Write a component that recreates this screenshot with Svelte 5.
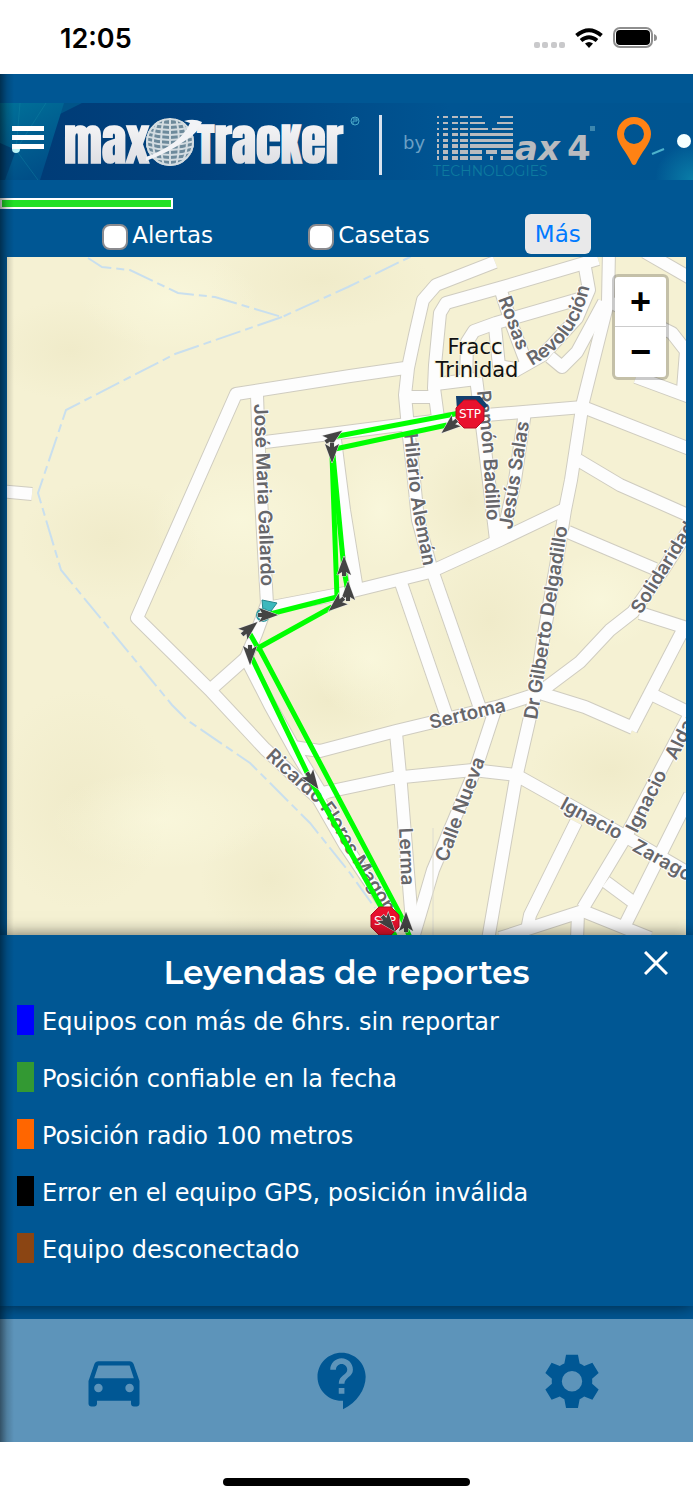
<script lang="ts">
    // State variables
    let alertas: boolean = false;
    let casetas: boolean = false;
    let showLegend: boolean = true;
    const progress: number = 25;

    const legend = [
        { color: '#0000ff', text: 'Equipos con más de 6hrs. sin reportar' },
        { color: '#339933', text: 'Posición confiable en la fecha' },
        { color: '#ff6600', text: 'Posición radio 100 metros' },
        { color: '#000000', text: 'Error en el equipo GPS, posición inválida' },
        { color: '#8b4513', text: 'Equipo desconectado' }
    ];

    // Bottom navigation, icons drawn on a 24x24 grid
    const tabs = [
        {
            label: 'Unidades',
            path: 'M18.92 6.01C18.72 5.42 18.16 5 17.5 5h-11c-.66 0-1.21.42-1.42 1.01L3 12v8c0 .55.45 1 1 1h1c.55 0 1-.45 1-1v-1h12v1c0 .55.45 1 1 1h1c.55 0 1-.45 1-1v-8l-2.08-5.99zM6.5 16c-.83 0-1.5-.67-1.5-1.5S5.67 13 6.5 13s1.5.67 1.5 1.5S7.33 16 6.5 16zm11 0c-.83 0-1.5-.67-1.5-1.5s.67-1.5 1.5-1.5 1.5.67 1.5 1.5-.67 1.5-1.5 1.5zM5 11l1.5-4.5h11L19 11H5z'
        },
        {
            label: 'Ayuda',
            path: 'M11.5 2C6.81 2 3 5.81 3 10.5S6.81 19 11.5 19h.5v3c4.86-2.34 8-7 8-11.5C20 5.81 16.19 2 11.5 2zm1 14.5h-2v-2h2v2zm0-3.5h-2c0-3.25 3-3 3-5 0-1.1-.9-2-2-2s-2 .9-2 2h-2c0-2.21 1.79-4 4-4s4 1.79 4 4c0 2.5-3 2.75-3 5z'
        },
        {
            label: 'Ajustes',
            path: 'M9.9 2.7h4.2l.6 3.1q.8.3 1.6.9l2.9-1.1 2.2 3.6-2.3 2q.1.9 0 1.8l2.3 2-2.2 3.6-2.9-1.1q-.8.6-1.6.9l-.6 3.1H9.9l-.6-3.1q-.8-.3-1.6-.9l-2.9 1.1-2.2-3.6 2.3-2q-.1-.9 0-1.8l-2.3-2 2.2-3.6 2.9 1.1q.8-.6 1.6-.9zM12 8.5a3.6 3.6 0 1 0 0 7.2 3.6 3.6 0 0 0 0-7.2z'
        }
    ];

    // Map data
    const roads: string[] = [
        'M0 491L32 494',
        'M405 368L350 376L236 394L137 618L210 690L265 749L318 798L345 845L402 930',
        'M257 395L260 480L267 604L256 634L246 658L270 705L296 752L325 800',
        'M246 658L210 690',
        'M265 442L330 434L400 425L486 415L583 407L690 449',
        'M335 440L344 510L357 590',
        'M267 608L345 593L430 572L500 540L567 508',
        'M495 262L436 285L423 300L415 335L408 368L405 395L408 428L413 470L418 520L433 575',
        'M598 259L503 287L446 303L440 313L435 365L434 388L438 418',
        'M406 397H434',
        'M586 297L496 323L474 331L467 342L466 385',
        'M436 384L476 379',
        'M500 288L512 325L526 362',
        'M495 327L499 366L520 370',
        'M584 262L589 290L577 318L543 355L513 372',
        'M550 357L562 367L577 352L604 302',
        'M609 250L608 302L583 402L571 480L565 510L557 560L543 640L535 695L516 778L488 940',
        'M645 252L690 278',
        'M610 302L672 333L686 351L683 390',
        'M636 377L690 397',
        'M476 378L482 425L490 490L496 540',
        'M525 412L515 480L503 535',
        'M578 460L620 485L690 516',
        'M568 532L655 569',
        'M690 528L663 570L633 612L610 630L580 662L540 692',
        'M640 613L690 629',
        'M684 628L631 730',
        'M540 693L585 707L633 728',
        'M653 695L690 713',
        'M401 583L446 714',
        'M433 573L480 708',
        'M293 747L320 751L396 731L500 706L537 694',
        'M322 793L393 778L473 770L516 775L623 835L690 874',
        'M396 733L401 785L411 910L413 940',
        'M495 710L476 768L433 870L413 938',
        'M576 822L530 915L527 930',
        'M500 938L583 911L650 938',
        'M578 913L577 940',
        'M583 908L625 838L690 714',
        'M690 795L660 855L625 925',
        'M606 882L633 902'
    ];

    const streams: string[] = [
        'M88 258L102 267L130 270L178 293L215 297L282 317L348 287L412 256',
        'M282 317L175 354L66 410L38 493L61 570L172 705L187 720L250 763L310 823L350 873L375 908'
    ];

    const streets = [
        { text: 'José Maria Gallardo', d: 'M254 404L262 604' },
        { text: 'Hilario Alemán', d: 'M404 434L411 500L425 576' },
        { text: 'Ramón Badillo', d: 'M477 391L483 450L488 540' },
        { text: 'Jesús Salas', d: 'M512 530L531 410' },
        { text: 'Dr Gilberto Delgadillo', d: 'M537 720L572 500' },
        { text: 'Sertoma', d: 'M431 729L520 708' },
        { text: 'Solidaridad', d: 'M641 615L716 495' },
        { text: 'Calle Nueva', d: 'M447 863L492 741' },
        { text: 'Lerma', d: 'M399 828L402 900' },
        { text: 'Ignacio', d: 'M559 808L640 852' },
        { text: 'Zaragoza', d: 'M631 850L730 905' },
        { text: 'Ignacio', d: 'M637 834L680 748' },
        { text: 'Aldama', d: 'M676 761L722 669' },
        { text: 'Rosas', d: 'M498 299L524 368' },
        { text: 'Revolución', d: 'M532 366C560 350 587 325 593 265' },
        { text: 'Ricardo Flores Magón', d: 'M265 757L303 792Q325 808 345 850L400 936' }
    ];

    const route: string[] = [
        'M460 413L333 437',
        'M447 425L335 449',
        'M332 455L337 597L270 614',
        'M333 455L344 570L348 592',
        'M332 607L258 648L250 634',
        'M258 646L401 916L411 940',
        'M251 656L313 785L380 905L397 940'
    ];

    const arrows = [
        { x: 333, y: 437, r: 55 },
        { x: 332, y: 452, r: 180 },
        { x: 450, y: 426, r: 230 },
        { x: 344, y: 567, r: 0 },
        { x: 348, y: 592, r: 0 },
        { x: 337, y: 604, r: 230 },
        { x: 267, y: 615, r: 90 },
        { x: 249, y: 629, r: 50 },
        { x: 250, y: 654, r: 180 },
        { x: 312, y: 780, r: 145 },
        { x: 388, y: 923, r: 140 },
        { x: 406, y: 923, r: 0 }
    ];

    // Striped M of the Max4 logo: y, thickness and the [from, to] pieces of each row
    const stripes = [
        { y: 13, h: 2, parts: [[470, 482], [500, 513]] },
        { y: 19, h: 2, parts: [[470, 485], [497, 513]] },
        { y: 25, h: 2, parts: [[470, 488], [492, 513]] },
        { y: 30, h: 3, parts: [[470, 513]] },
        { y: 36, h: 3, parts: [[470, 513]] },
        { y: 41, h: 4, parts: [[470, 513]] },
        { y: 47, h: 4, parts: [[470, 482], [486, 497], [501, 513]] },
        { y: 53, h: 4, parts: [[470, 482], [490, 493], [501, 513]] }
    ];
    const bars = [[437, 439], [443, 448], [452, 458], [460, 468]];

    function closeLegend() {
        showLegend = false;
    }
</script>

<div class="phone">
    <!-- System status bar -->
    <div class="status-bar">
        <span class="clock">12:05</span>
        <svg class="status-icons" viewBox="0 0 124 24" aria-hidden="true">
            <g fill="#c9c9cb">
                <rect x="1" y="16" width="6" height="6" rx="2" />
                <rect x="9" y="16" width="6" height="6" rx="2" />
                <rect x="18" y="16" width="6" height="6" rx="2" />
                <rect x="26" y="16" width="6" height="6" rx="2" />
            </g>
            <g fill="none" stroke="#000" stroke-width="4">
                <path d="M43.500 9.500Q56 -1 68.500 9.500" />
                <path d="M48 14.500Q56 8 64 14.500" />
            </g>
            <path d="M52 17.500Q56 14.500 60 17.500L56 22z" />
            <rect x="81" y="2" width="38" height="19" rx="6" fill="none" stroke="#8e8e8e" stroke-width="2" />
            <rect x="83" y="4" width="34" height="15" rx="4" />
            <path d="M121 8q3 1 3 4t-3 3z" fill="#8e8e8e" />
        </svg>
    </div>

    <div class="app">
        <!-- Brand banner -->
        <header class="banner">
            <svg viewBox="0 0 693 77" role="img" aria-label="maxTracker by Max4 Technologies">
                <defs>
                    <linearGradient id="band">
                        <stop offset="0" stop-color="#003a75" />
                        <stop offset="0.300" stop-color="#00437f" />
                        <stop offset="0.650" stop-color="#005593" />
                        <stop offset="1" stop-color="#005591" />
                    </linearGradient>
                    <linearGradient id="teal" x2="0.400" y2="1">
                        <stop offset="0" stop-color="#007199" />
                        <stop offset="1" stop-color="#004f88" />
                    </linearGradient>
                    <linearGradient id="chrome" x2="0" y2="1">
                        <stop offset="0" stop-color="#fff" />
                        <stop offset="1" stop-color="#d5d6dc" />
                    </linearGradient>
                    <radialGradient id="glow">
                        <stop offset="0" stop-color="#0a7ea8" />
                        <stop offset="1" stop-color="#0a7ea8" stop-opacity="0" />
                    </radialGradient>
                    <clipPath id="globe-clip"><circle cx="170" cy="39" r="24" /></clipPath>
                </defs>
                <rect width="693" height="77" fill="url(#band)" />
                <path d="M63 0H82L58 12z" fill="#005488" />
                <path d="M0 0H64L40 77H0z" fill="url(#teal)" />
                <path d="M0 40L16 47L5 77H0z" fill="#004478" />
                <path d="M16 47L20 0M16 47L46 0M16 47L38 77" stroke="#1287a6" opacity="0.400" />
                <circle cx="16" cy="46" r="4" fill="#b9f4f7" />
                <circle cx="693" cy="77" r="38" fill="url(#glow)" />

                <text class="brand" x="64" y="60">max</text>
                <circle cx="170" cy="39" r="24" fill="#6d8a9b" />
                <g clip-path="url(#globe-clip)" fill="none" stroke="#d3dce1" stroke-width="2">
                    <path d="M145 18Q170 26 195 18M145 23Q170 31 195 23M145 28Q170 36 195 28M145 33Q170 41 195 33M145 38Q170 46 195 38M145 43Q170 51 195 43M145 48Q170 56 195 48M145 53Q170 61 195 53M145 58Q170 66 195 58" />
                    <path d="M170 14V64M164 14Q158 39 164 64M176 14Q182 39 176 64M160 14Q146 39 160 64M180 14Q194 39 180 64M155 14Q138 39 155 64M185 14Q202 39 185 64" />
                    <circle cx="170" cy="39" r="23" />
                </g>
                <path d="M146 54Q181 41 190 20L184 18Q194 15 202 19Q198 30 186 37Q170 49 146 58z" fill="#f2f3f6" />
                <text class="brand" x="197" y="60"><tspan class="brand-cap">T</tspan>rac<tspan class="brand-cap">K</tspan>er</text>
                <circle cx="355" cy="18" r="4" fill="none" stroke="#49a9c9" stroke-width="1" />
                <path d="M353 16h4v2h-4v3" fill="none" stroke="#49a9c9" />
                <rect x="379" y="12" width="3" height="60" fill="#d8e2ee" />
                <text class="by" x="403" y="46">by</text>

                <g fill="#b9bbbf">
                    {#each stripes as row}
                        {#each [...bars, ...row.parts] as [from, to]}
                            <rect x={from} y={row.y} width={to - from} height={row.h} />
                        {/each}
                    {/each}
                </g>
                <text class="max4" x="515" y="57">ax</text>
                <text class="max4-number" x="567" y="57">4</text>
                <rect x="590" y="23" width="5" height="5" fill="#3d87ae" />
                <text class="technologies" x="433" y="73">TECHNOLOGIES</text>

                <path d="M634 14a17 17 0 0 1 17 17c0 10-10 18-15 30q-2 2-4 0c-5-12-15-20-15-30a17 17 0 0 1 17-17zm0 7a10 10 0 1 0 0 20 10 10 0 0 0 0-20z" fill="#ff8214" />
                <path d="M652 51L664 46" stroke="#4db3cd" stroke-width="2" />
                <circle cx="684" cy="38" r="7" fill="#f4ffff" />
            </svg>
            <button class="menu-button" aria-label="Menú">
                <span></span>
                <span></span>
                <span></span>
            </button>
        </header>

        <div class="progress" style="width: {progress}%;"></div>

        <!-- Map filters -->
        <div class="filters">
            <label><input type="checkbox" bind:checked={alertas} />Alertas</label>
            <label><input type="checkbox" bind:checked={casetas} />Casetas</label>
            <button class="more-button">Más</button>
        </div>

        <!-- Map -->
        <div class="map">
            <svg viewBox="7 257 679 678" role="img" aria-label="Mapa de recorrido">
                <defs>
                    <radialGradient id="relief">
                        <stop offset="0" stop-color="#ebe5c0" stop-opacity="0.500" />
                        <stop offset="1" stop-color="#ebe5c0" stop-opacity="0" />
                    </radialGradient>
                    <radialGradient id="relief-light">
                        <stop offset="0" stop-color="#fbfae0" stop-opacity="0.600" />
                        <stop offset="1" stop-color="#fbfae0" stop-opacity="0" />
                    </radialGradient>
                </defs>
                <rect x="7" y="257" width="679" height="678" fill="#f5f1d3" />
                <g fill="url(#relief)">
                    <ellipse cx="70" cy="350" rx="80" ry="50" />
                    <ellipse cx="320" cy="280" rx="110" ry="50" />
                    <ellipse cx="110" cy="540" rx="90" ry="60" />
                    <ellipse cx="80" cy="800" rx="90" ry="110" />
                    <ellipse cx="270" cy="880" rx="70" ry="60" />
                    <ellipse cx="330" cy="700" rx="70" ry="50" />
                    <ellipse cx="490" cy="620" rx="70" ry="80" />
                    <ellipse cx="610" cy="770" rx="80" ry="50" />
                    <ellipse cx="470" cy="500" rx="50" ry="60" />
                </g>
                <g fill="url(#relief-light)">
                    <ellipse cx="170" cy="300" rx="90" ry="50" />
                    <ellipse cx="240" cy="520" rx="90" ry="60" />
                    <ellipse cx="160" cy="820" rx="110" ry="50" />
                    <ellipse cx="370" cy="660" rx="60" ry="60" />
                    <ellipse cx="600" cy="600" rx="60" ry="50" />
                    <ellipse cx="380" cy="510" rx="40" ry="60" />
                </g>

                {#each streams as d}
                    <path class="stream" {d} />
                {/each}
                {#each roads as d}
                    <path class="road-edge" {d} />
                {/each}
                {#each roads as d}
                    <path class="road" {d} />
                {/each}
                <path d="M433 828V935" stroke="#dddcd0" />

                {#each streets as street, i}
                    <path id="street-{i}" d={street.d} fill="none" />
                    <text class="street"><textPath href="#street-{i}">{street.text}</textPath></text>
                {/each}
                <text class="district" x="475" y="354">Fracc</text>
                <text class="district" x="477" y="377">Trinidad</text>

                {#each route as d}
                    <path class="route" {d} />
                {/each}

                <!-- Vehicle markers -->
                <path d="M456 396h24l8 10-6 4h-25z" fill="#123f6e" />
                <path d="M262 600l15 3-6 8h-8z" fill="#3cb8bd" stroke="#24868c" />
                <circle cx="263" cy="615" r="6" fill="#d9efed" stroke="#2f9c9f" stroke-width="2" />
                {#each [[470, 414], [385, 921]] as [x, y]}
                    <g transform="translate({x} {y})">
                        <path d="M-6 -14H6L14 -6V6L6 14H-6L-14 6V-6z" fill="#e8112d" stroke="#b50d22" />
                        <text class="stop" y="4">STP</text>
                    </g>
                {/each}

                {#each arrows as arrow}
                    <path
                        class="arrow"
                        d="M0 -11L7 8L2 5V9H-2V5L-7 8z"
                        transform="translate({arrow.x} {arrow.y}) rotate({arrow.r})"
                    />
                {/each}
            </svg>
            <div class="zoom">
                <button aria-label="Acercar">+</button>
                <button aria-label="Alejar">−</button>
            </div>
        </div>

        <!-- Legend panel -->
        {#if showLegend}
            <section class="legend">
                <h2>Leyendas de reportes</h2>
                <button class="close-button" aria-label="Cerrar" on:click={closeLegend}>
                    <svg viewBox="0 0 24 24"><path d="M1 1L23 23M23 1L1 23" /></svg>
                </button>
                <ul>
                    {#each legend as item}
                        <li><span class="swatch" style="background-color: {item.color};"></span>{item.text}</li>
                    {/each}
                </ul>
            </section>
        {/if}

        <nav class="tabs">
            {#each tabs as tab}
                <button aria-label={tab.label}>
                    <svg viewBox="0 0 24 24"><path d={tab.path} fill-rule="evenodd" /></svg>
                </button>
            {/each}
        </nav>
    </div>

    <div class="home-area">
        <div class="home-indicator"></div>
    </div>
</div>

<style>
    :global(body) {
        margin: 0;
        background-color: #fff;
    }

    .phone {
        font-family: "DejaVu Sans", Verdana, sans-serif;
        font-size: 24px;
        color: #fff;
    }

    button {
        padding: 0;
        border: none;
        background: none;
        font-family: inherit;
        cursor: pointer;
    }

    svg {
        display: block;
    }

    /* Status bar */
    .status-bar {
        display: flex;
        justify-content: space-between;
        align-items: center;
        box-sizing: border-box;
        height: 74px;
        padding: 2px 36px 0 60px;
        background-color: #fff;
        color: #000;
    }

    .clock {
        font-family: Inter, sans-serif;
        font-size: 27px;
        font-weight: 600;
    }

    .status-icons {
        width: 124px;
        height: 24px;
    }

    .app {
        position: relative;
        padding-top: 29px;
        background-color: #005794;
    }

    .app::after {
        content: "";
        position: absolute;
        top: 0;
        bottom: 0;
        left: 0;
        width: 14px;
        background: linear-gradient(to right, rgba(0, 0, 0, 0.45), rgba(0, 0, 0, 0.15) 50%, rgba(0, 0, 0, 0));
        pointer-events: none;
        z-index: 3;
    }

    /* Banner */
    .banner {
        position: relative;
    }

    .banner svg {
        width: 100%;
    }

    .brand {
        font-family: Anton, Impact, "Liberation Sans", sans-serif;
        font-size: 50px;
        font-weight: bold;
        fill: url(#chrome);
    }

    .brand-cap {
        font-size: 44px;
    }

    .by {
        font-size: 18px;
        fill: #6aa0c5;
    }

    .max4,
    .max4-number {
        font-size: 34px;
        font-weight: bold;
        font-style: italic;
        fill: #b9bbbf;
    }

    .max4-number {
        font-style: normal;
    }

    .technologies {
        font-family: Montserrat, sans-serif;
        font-size: 14px;
        fill: #0d7a9f;
    }

    .menu-button {
        position: absolute;
        top: 23px;
        left: 12px;
        display: flex;
        flex-direction: column;
        gap: 4px;
    }

    .menu-button span {
        width: 32px;
        height: 5px;
        background-color: #fff;
    }

    .progress {
        box-sizing: border-box;
        height: 11px;
        margin: 18px 0 4px;
        border: 2px solid #fff;
        background-color: #21e026;
    }

    /* Filters */
    .filters {
        display: flex;
        justify-content: space-evenly;
        align-items: center;
        height: 44px;
        padding: 0 7px;
        font-size: 23px;
    }

    .filters label {
        display: flex;
        align-items: center;
        gap: 4px;
    }

    .filters input {
        appearance: none;
        box-sizing: border-box;
        width: 26px;
        height: 26px;
        margin: 4px 0 0;
        border: 2px solid #8b8b8f;
        border-radius: 8px;
        background-color: #fff;
    }

    .filters input:checked {
        background-color: #007aff;
    }

    .more-button {
        height: 40px;
        margin-bottom: 3px;
        padding: 0 10px;
        border-radius: 6px;
        background-color: #e9e9ea;
        color: #007aff;
        font-size: 23px;
    }

    /* Map */
    .map {
        position: relative;
        margin: 0 7px;
    }

    .map > svg {
        width: 100%;
    }

    .stream {
        fill: none;
        stroke: #c9dfee;
        stroke-width: 2;
        stroke-dasharray: 26 5 8 5;
    }

    .road-edge,
    .road {
        fill: none;
        stroke-linejoin: round;
    }

    .road-edge {
        stroke: #cfccc0;
        stroke-width: 14;
    }

    .road {
        stroke: #fdfdfd;
        stroke-width: 12;
    }

    .street {
        font-family: Inter, Arial, sans-serif;
        font-size: 19px;
        font-weight: 600;
        fill: #66666a;
        stroke: #fdfdfd;
        stroke-width: 2;
        paint-order: stroke;
    }

    .district {
        font-size: 21px;
        text-anchor: middle;
        fill: #111;
        stroke: #f7f4dc;
        stroke-width: 2;
        paint-order: stroke;
    }

    .route {
        fill: none;
        stroke: #00ff00;
        stroke-width: 5;
    }

    .arrow {
        fill: #444;
        stroke: #e6e6e6;
        stroke-width: 1;
        paint-order: stroke;
    }

    .stop {
        font-size: 12px;
        text-anchor: middle;
        fill: #fff;
    }

    .zoom {
        position: absolute;
        top: 17px;
        right: 17px;
        width: 51px;
        border: 3px solid rgba(0, 0, 0, 0.2);
        border-radius: 6px;
        background-clip: padding-box;
        background-color: #fff;
    }

    .zoom button {
        display: block;
        width: 100%;
        height: 50px;
        color: #000;
        font-family: "Liberation Sans", Arial, sans-serif;
        font-size: 36px;
        font-weight: bold;
        line-height: 50px;
    }

    .zoom button:first-child {
        border-bottom: 1px solid #ccc;
    }

    /* Legend */
    .legend {
        position: relative;
        box-sizing: border-box;
        min-height: 371px;
        padding: 17px 17px 19px;
        background-color: #005794;
        box-shadow: 0 0 16px rgba(0, 0, 0, 0.6);
    }

    .legend h2 {
        margin: 0 0 10px;
        font-family: Montserrat, Inter, sans-serif;
        font-size: 33px;
        font-weight: 600;
        line-height: 40px;
        text-align: center;
    }

    .close-button {
        position: absolute;
        top: 16px;
        right: 25px;
        width: 24px;
        height: 24px;
    }

    .close-button path {
        stroke: #fff;
        stroke-width: 3;
    }

    .legend ul {
        margin: 0;
        padding: 0;
        list-style: none;
    }

    .legend li {
        display: flex;
        align-items: center;
        gap: 8px;
        height: 40px;
        margin-bottom: 17px;
    }

    .swatch {
        width: 17px;
        height: 30px;
        margin-bottom: 4px;
    }

    /* Bottom navigation */
    .tabs {
        position: relative;
        display: grid;
        grid-template-columns: repeat(3, 1fr);
        height: 123px;
        margin-top: 13px;
        padding-right: 7px;
        background-color: #5d94ba;
        z-index: 1;
    }

    .tabs button {
        display: flex;
        justify-content: center;
        align-items: center;
    }

    .tabs svg {
        width: 68px;
        height: 68px;
        fill: #005794;
    }

    /* Home indicator */
    .home-area {
        display: flex;
        justify-content: center;
        align-items: center;
        box-sizing: border-box;
        height: 58px;
        padding-top: 21px;
        background-color: #fff;
    }

    .home-indicator {
        width: 247px;
        height: 8px;
        border-radius: 4px;
        background-color: #000;
    }
</style>
